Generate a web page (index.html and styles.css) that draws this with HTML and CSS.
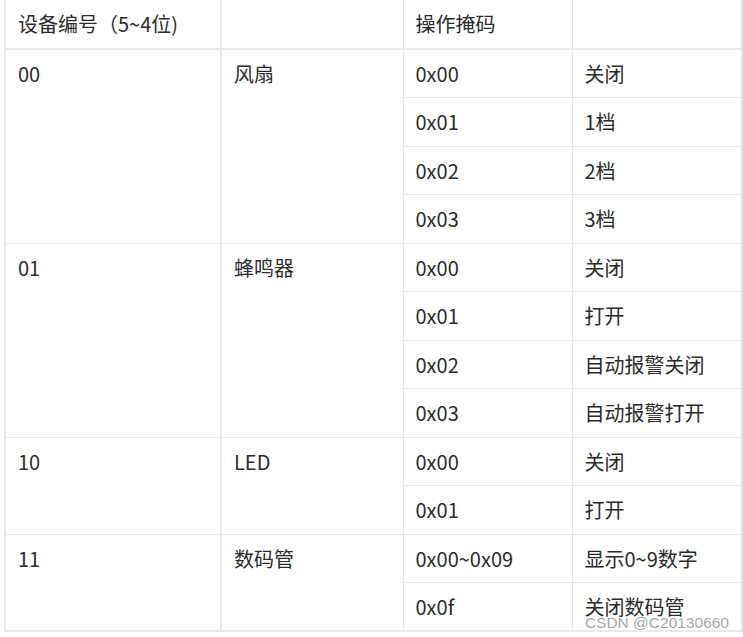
FILE: index.html
```html
<!DOCTYPE html>
<html lang="zh">
<head>
<meta charset="utf-8">
<link rel="stylesheet" href="styles.css">
</head>
<body>
<table class="tbl">
  <colgroup>
    <col class="c1"><col class="c2"><col class="c3"><col class="c4">
  </colgroup>
  <thead>
    <tr class="hd"><th class="b1">设备编号（5~4位)</th><th></th><th>操作掩码</th><th></th></tr>
  </thead>
  <tbody>
    <tr><td rowspan="4" class="b1">00</td><td rowspan="4">风扇</td><td>0x00</td><td>关闭</td></tr>
    <tr><td>0x01</td><td>1档</td></tr>
    <tr><td>0x02</td><td>2档</td></tr>
    <tr><td>0x03</td><td>3档</td></tr>
    <tr><td rowspan="4" class="b1">01</td><td rowspan="4">蜂鸣器</td><td>0x00</td><td>关闭</td></tr>
    <tr><td>0x01</td><td>打开</td></tr>
    <tr><td>0x02</td><td>自动报警关闭</td></tr>
    <tr><td>0x03</td><td>自动报警打开</td></tr>
    <tr><td rowspan="2" class="b1">10</td><td rowspan="2">LED</td><td>0x00</td><td>关闭</td></tr>
    <tr><td>0x01</td><td>打开</td></tr>
    <tr><td rowspan="2" class="b1">11</td><td rowspan="2">数码管</td><td>0x00~0x09</td><td>显示0~9数字</td></tr>
    <tr><td>0x0f</td><td>关闭数码管</td></tr>
  </tbody>
</table>
<div class="wm">CSDN @C20130660</div>
</body>
</html>
```
FILE: styles.css
```css
html, body {
  margin: 0;
  padding: 0;
  background: #fff;
}
body {
  width: 743px;
  height: 637px;
  overflow: hidden;
  position: relative;
  font-family: "Noto Sans CJK SC", "Noto Sans", sans-serif;
  font-size: 20px;
  color: #2b2b2b;
}
.tbl {
  border-collapse: collapse;
  table-layout: fixed;
  margin: -2px 0 0 4px;
  width: 737px;
  border: 2px solid #e8e8e8;
}
.c1 { width: 216px; }
.c2 { width: 182px; }
.c3 { width: 169px; }
.c4 { width: 170px; }
.tbl th, .tbl td {
  border: 1px solid #e8e8e8;
  text-align: left;
  vertical-align: top;
  font-weight: normal;
  padding: 12px 12px 0 12px;
  line-height: 24px;
  box-sizing: border-box;
  white-space: nowrap;
}
.tbl .b1 { border-right-width: 2px; }
.hd th {
  height: 50px;
  padding-top: 12px;
  border-bottom-width: 2px;
}
.tbl tbody tr { height: 48.5px; }
.wm {
  position: absolute;
  right: 14px;
  bottom: 5px;
  font-family: "Liberation Sans", Arial, sans-serif;
  font-size: 15.5px;
  color: rgba(150, 150, 150, 0.85);
  text-shadow: 0 0 2px #fff;
}
```
